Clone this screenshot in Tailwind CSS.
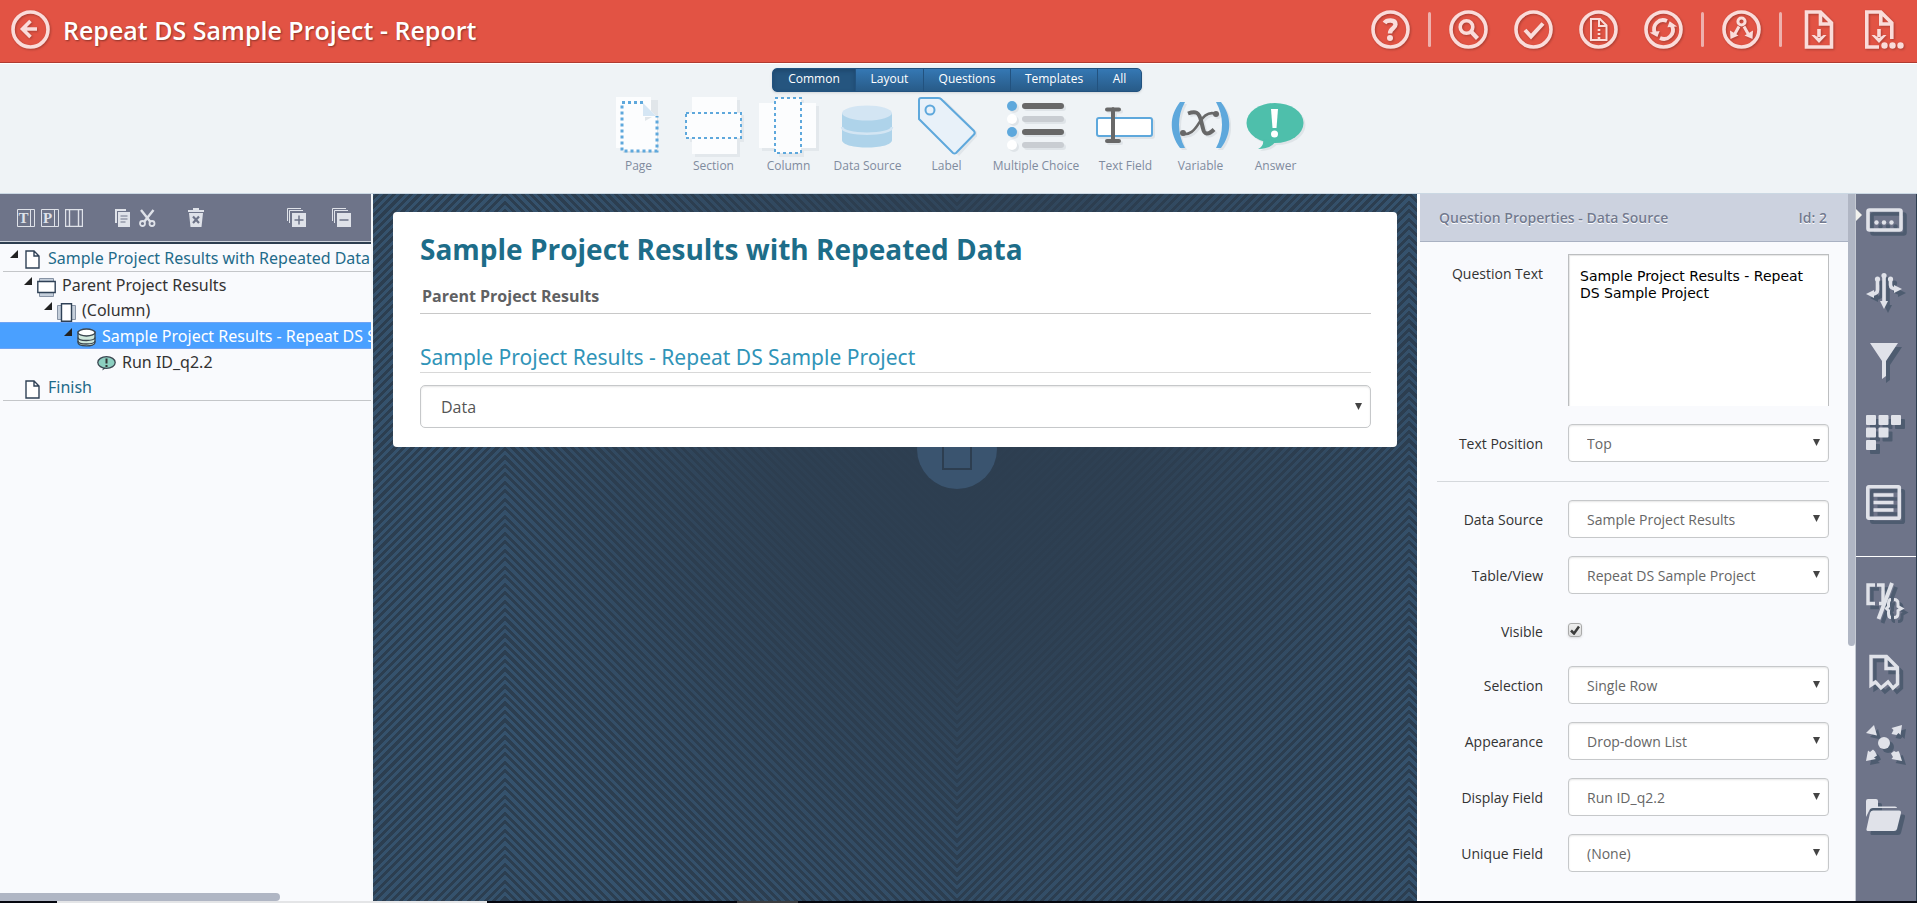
<!DOCTYPE html>
<html lang="en">
<head>
<meta charset="utf-8">
<title>Repeat DS Sample Project - Report</title>
<script src="https://cdn.jsdelivr.net/npm/@tailwindcss/browser@4"></script>
</head>
<body class="h-screen flex flex-col overflow-hidden bg-[#eff3f6] font-['Open_Sans','Noto_Sans',sans-serif] text-[#333]">

<header class="h-16 shrink-0 flex items-center bg-[#e25344] border-b border-white pl-[11px] pr-[13px] pb-1 shadow-[inset_0_-1px_0_#b03a30] text-[#fadcda]">
  <button aria-label="Back" class="shrink-0">
    <svg class="size-[39px] drop-shadow-[1px_1px_1px_rgba(0,0,0,0.25)]" viewBox="0 0 39 39" fill="none" stroke="currentColor"><circle cx="19.500" cy="19.500" r="17.500" stroke-width="3.600"/><path d="M26 19H12.500M19.500 11l-8 8 8 8" stroke-width="3.600"/></svg>
  </button>
  <h1 class="ml-[13px] flex-1 text-[25px] leading-8 font-semibold text-white [text-shadow:1px_1px_2px_rgba(0,0,0,0.4)]">Repeat DS Sample Project - Report</h1>
  <nav class="flex items-center gap-[18px]">
    <button aria-label="Help"><svg class="size-[39px] drop-shadow-[1px_1px_1px_rgba(0,0,0,0.25)]" viewBox="0 0 39 39" fill="none" stroke="currentColor"><circle cx="19.500" cy="19.500" r="17.500" stroke-width="3.600"/><path d="M13.500 13c2-3 11-4 11 1.500 0 4-5.500 3.500-5.500 9" stroke-width="4.400"/><circle cx="19" cy="28" r="3" fill="currentColor" stroke="none"/></svg></button>
    <span class="w-[3px] h-[35px] rounded bg-[#eeb0ac]"></span>
    <div class="flex gap-[26px]">
      <button aria-label="Preview"><svg class="size-[39px] drop-shadow-[1px_1px_1px_rgba(0,0,0,0.25)]" viewBox="0 0 39 39" fill="none" stroke="currentColor"><circle cx="19.500" cy="19.500" r="17.500" stroke-width="3.600"/><circle cx="17.500" cy="17" r="6.300" stroke-width="3.600"/><path d="M22 21.500l6.500 7" stroke-width="4.200"/></svg></button>
      <button aria-label="Validate"><svg class="size-[39px] drop-shadow-[1px_1px_1px_rgba(0,0,0,0.25)]" viewBox="0 0 39 39" fill="none" stroke="currentColor"><circle cx="19.500" cy="19.500" r="17.500" stroke-width="3.600"/><path d="M11 20l6 6.500L29 13.500" stroke-width="4"/></svg></button>
      <button aria-label="Document"><svg class="size-[39px] drop-shadow-[1px_1px_1px_rgba(0,0,0,0.25)]" viewBox="0 0 39 39" fill="none" stroke="currentColor"><circle cx="19.500" cy="19.500" r="17.500" stroke-width="3.600"/><path d="M12 9h9l6.500 6.500V30H12zM20 9v7h7.500" stroke-width="2"/><path d="M20 19v10" stroke-width="2.600" stroke-dasharray="2 2"/></svg></button>
      <button aria-label="Refresh"><svg class="size-[39px] drop-shadow-[1px_1px_1px_rgba(0,0,0,0.25)]" viewBox="0 0 39 39" fill="none" stroke="currentColor"><circle cx="19.500" cy="19.500" r="17.500" stroke-width="3.600"/><path d="M23 11a9 9 0 0 0-12 12M16 28a9 9 0 0 0 12-12" stroke-width="3.800"/><path d="M24.500 16.500l1.500-4 5 3.500zM8 23l5 3 1.500-4z" stroke-width="1.500" fill="currentColor"/></svg></button>
    </div>
    <span class="w-[3px] h-[35px] rounded bg-[#eeb0ac]"></span>
    <button aria-label="Share"><svg class="size-[39px] drop-shadow-[1px_1px_1px_rgba(0,0,0,0.25)]" viewBox="0 0 39 39" fill="none" stroke="currentColor"><circle cx="19.500" cy="19.500" r="17.500" stroke-width="3.600"/><circle cx="19.500" cy="11.500" r="3.600" stroke-width="3"/><path d="M17 16.500l-4.500 8M22 16.500l4.500 8" stroke-width="3"/><path d="M8 20.500l8.500 5-8 3.500zM31 20.500l-8.500 5 8 3.500z" fill="currentColor" stroke="none"/></svg></button>
    <span class="w-[3px] h-[35px] rounded bg-[#eeb0ac]"></span>
    <div class="flex gap-[26px]">
      <button aria-label="Save"><svg class="size-[39px] drop-shadow-[1px_1px_1px_rgba(0,0,0,0.25)]" viewBox="0 0 39 39" fill="none" stroke="currentColor"><path d="M6.500 2h14l11 11v24h-25zM20.500 2v12h11" stroke-width="3.600"/><path d="M19 19v8" stroke-width="3.600"/><path d="M11.500 25h3l4.500 3 4.500-3h3L19 33z" fill="currentColor" stroke="none"/></svg></button>
      <button aria-label="Save as"><svg class="size-[39px] drop-shadow-[1px_1px_1px_rgba(0,0,0,0.25)]" viewBox="0 0 39 39" fill="none" stroke="currentColor"><path d="M14 37H1.800V2h14l11 11v16M15.800 2v12h11" stroke-width="3.600"/><path d="M14 19v8" stroke-width="3.600"/><path d="M6.500 25h3l4.500 3 4.500-3h3L14 33z" fill="currentColor" stroke="none"/><g fill="currentColor" stroke="none"><circle cx="19.500" cy="35.500" r="3.200"/><circle cx="27.500" cy="35.500" r="3.200"/><circle cx="35.500" cy="35.500" r="3.200"/></g></svg></button>
    </div>
  </nav>
</header>

<section class="h-[130px] shrink-0 flex flex-col items-center pt-1 pr-[3px] border-b border-[#cbd8e3]">
  <div role="tablist" class="flex h-6 rounded-[5px] overflow-hidden border border-[#22527f] bg-linear-to-b from-[#3578b4] to-[#285b88] text-[12px] leading-5 text-white shadow-sm [text-shadow:0_1px_1px_rgba(0,0,0,0.4)]">
    <button role="tab" class="w-[82px] pb-[2px] bg-[#25557f] shadow-[inset_0_2px_4px_#1d466c]">Common</button>
    <button role="tab" class="w-[68px] pb-[2px] border-l border-[#22527f]">Layout</button>
    <button role="tab" class="w-[87px] pb-[2px] border-l border-[#22527f]">Questions</button>
    <button role="tab" class="w-[87px] pb-[2px] border-l border-[#22527f]">Templates</button>
    <button role="tab" class="w-[44px] pb-[2px] border-l border-[#22527f]">All</button>
  </div>
  <div class="flex gap-[15px] mt-1 text-[12px] leading-4 font-medium text-[#7f8b9e] [text-shadow:0_1px_0_#fff]">
    <button class="w-[60px] flex flex-col items-center">
      <svg class="w-[60px] h-[62px]" viewBox="0 0 60 62"><path d="M10 4h39v53H14z" fill="#e1e6ea"/><path d="M7 1h35v51H7z" fill="#fcfdfe"/><path d="M13 7h21l14 14v34H13z" fill="#fcfdfe"/><path d="M34 7v13h13z" fill="#d5e6f4"/><path d="M36 25l7-4h-7z" fill="#e1e6ea"/><path d="M34 6.500H13V55h35V20" fill="none" stroke="#5ea8dc" stroke-width="3" stroke-dasharray="3 3"/></svg>
      Page</button>
    <button class="w-[60px] flex flex-col items-center">
      <svg class="w-[60px] h-[62px]" viewBox="0 0 60 62"><path d="M6 19h54v27H6zM11 4h45v57H11z" fill="#e3e8ec"/><path d="M8 1h45v57H8z" fill="#fcfdfe"/><path d="M2 17h55v25H2z" fill="#fcfdfe" stroke="#5ea8dc" stroke-width="2" stroke-dasharray="3 3"/></svg>
      Section</button>
    <button class="w-[60px] flex flex-col items-center">
      <svg class="w-[60px] h-[62px]" viewBox="0 0 60 62"><path d="M3 10h57v45H3zM20 4h25v57H20z" fill="#e3e8ec"/><path d="M0 7h57v45H0z" fill="#fcfdfe"/><path d="M16 2h26v55H16z" fill="#fcfdfe" stroke="#5ea8dc" stroke-width="2" stroke-dasharray="3 3"/></svg>
      Column</button>
    <button class="w-[68px] flex flex-col items-center whitespace-nowrap">
      <svg class="w-[60px] h-[62px]" viewBox="0 0 60 62"><path d="M4 17v27c0 10 50 10 50 0V17z" fill="#aed3ea"/><ellipse cx="29" cy="17" rx="25" ry="7.500" fill="#d3e5f3"/><path d="M4 31c0 9 50 9 50 0" fill="none" stroke="#d3e5f3" stroke-width="2.500"/></svg>
      Data Source</button>
    <button class="w-[60px] flex flex-col items-center">
      <svg class="w-[60px] h-[62px]" viewBox="0 0 60 62"><path d="M4 4h24l34 34-20 22L5 26z" fill="#e1e6ea"/><path d="M4 2h17q2 0 3 1l33 32q1.500 2 0 3.500L39 57q-1.500 1-3 0L2 23V4q0-2 2-2z" fill="#e8f1f9" stroke="#5ea8dc" stroke-width="2"/><circle cx="13" cy="14" r="4.500" fill="none" stroke="#5ea8dc" stroke-width="2"/></svg>
      Label</button>
    <button class="w-[89px] flex flex-col items-center whitespace-nowrap">
      <svg class="w-[60px] h-[62px]" viewBox="0 0 60 62"><g class="drop-shadow-[2px_2px_0_#dfe4e8]"><circle cx="6" cy="10" r="5" fill="#5ea8dc"/><circle cx="6" cy="23" r="5" fill="#fff"/><circle cx="6" cy="36" r="5" fill="#5ea8dc"/><circle cx="6" cy="49" r="5" fill="#fff"/><g stroke-width="6" stroke-linecap="round"><path d="M19 10h36M19 36h36" stroke="#686868"/><path d="M19 23h36M19 49h36" stroke="#c9cdd2"/></g></g></svg>
      Multiple Choice</button>
    <button class="w-[60px] flex flex-col items-center whitespace-nowrap">
      <svg class="w-[60px] h-[62px]" viewBox="0 0 60 62"><g class="drop-shadow-[2px_2px_0_#dfe4e8]"><rect x="1" y="22" width="55" height="18" rx="2" fill="#fff" stroke="#5ea8dc" stroke-width="2"/><path d="M11 13.500h12M11 45h12M17 13v32" fill="none" stroke="#686868" stroke-width="4" stroke-linecap="round"/></g></svg>
      Text Field</button>
    <button class="w-[60px] flex flex-col items-center">
      <svg class="w-[60px] h-[62px]" viewBox="0 0 60 62"><g class="drop-shadow-[2px_2px_0_#dfe4e8]"><path d="M9 6h5C6 20 6 37 14 52h-5C-2 37-2 20 9 6zM45 6h5c11 14 11 31 0 46h-5c8-15 8-32 0-46z" fill="#5ea8dc"/><path d="M17 17.500c8-3 11-1 13 7l2 8c1 6 5 7 11 1" fill="none" stroke="#686868" stroke-width="4"/><path d="M45 18c-7-3-12 1-17 9s-9 12-17 11" fill="none" stroke="#686868" stroke-width="2.500"/><circle cx="45" cy="18" r="3" fill="#686868"/><circle cx="12" cy="37" r="3" fill="#686868"/></g></svg>
      Variable</button>
    <button class="w-[60px] flex flex-col items-center">
      <svg class="w-[60px] h-[62px]" viewBox="0 0 60 62"><g class="drop-shadow-[2px_2px_0_#dfe4e8]"><ellipse cx="29" cy="27" rx="28.500" ry="20" fill="#4ebfab"/><path d="M17 43c1 5-1 8-5 10 8 0 15-3 18-8z" fill="#4ebfab"/><path d="M25 13h7l-1.500 19h-4z" fill="#fff"/><circle cx="28.500" cy="38" r="3.500" fill="#fff"/></g></svg>
      Answer</button>
  </div>
</section>

<main class="relative flex-1 min-h-0 flex bg-[#2d3e50]">
  <!-- chevron backdrop: alternating mirrored stripes, darkened towards the middle -->
  <div aria-hidden="true" class="absolute inset-0 overflow-hidden flex justify-center pr-[3px]">
    <div class="w-[452px] shrink-0 bg-[repeating-linear-gradient(135deg,#2c3e50_0px,#2c3e50_3px,#35526d_3px,#35526d_6px)]"></div>
    <div class="w-[452px] shrink-0 -scale-x-100 bg-[repeating-linear-gradient(135deg,#2c3e50_0px,#2c3e50_3px,#35526d_3px,#35526d_6px)]"></div>
    <div class="w-[452px] shrink-0 bg-[repeating-linear-gradient(135deg,#2c3e50_0px,#2c3e50_3px,#35526d_3px,#35526d_6px)]"></div>
    <div class="w-[452px] shrink-0 -scale-x-100 bg-[repeating-linear-gradient(135deg,#2c3e50_0px,#2c3e50_3px,#35526d_3px,#35526d_6px)]"></div>
    <div class="absolute inset-0 bg-[radial-gradient(ellipse_500px_500px_at_50%_280px,#2d3e50_0%,#2d3e50dd_35%,transparent_100%)]"></div>
    <div class="absolute top-[215px] size-20 rounded-full bg-[#3a546f] flex justify-center items-center"><span class="w-[30px] h-[42px] border-2 border-[#2d3e50]"></span></div>
  </div>

  <aside class="relative w-[373px] shrink-0 flex flex-col border-r-2 border-[#f4f7f9] bg-[#f9fafd]">
    <div class="h-12 shrink-0 flex items-center pl-[17px] pr-5 bg-[#6e7489] border-b border-[#cfd4dc] text-[#dfe2e9]">
      <div class="flex gap-[6px]">
        <button aria-label="Title"><svg class="size-[18px]" viewBox="0 0 18 18" fill="none" stroke="currentColor"><path d="M.5.500h17v17H.500zM13.500.500v17" /><text x="1.500" y="14" font-family="Liberation Serif, serif" font-weight="bold" font-size="15" fill="currentColor" stroke="none">T</text></svg></button>
        <button aria-label="Page"><svg class="size-[18px]" viewBox="0 0 18 18" fill="none" stroke="currentColor"><path d="M.5.500h17v17H.500zM13.500.500v17"/><text x="2" y="14" font-family="Liberation Serif, serif" font-weight="bold" font-size="15" fill="currentColor" stroke="none">P</text></svg></button>
        <button aria-label="Columns"><svg class="size-[18px]" viewBox="0 0 18 18" fill="none" stroke="currentColor"><path d="M.5.500h17v17H.500zM4.500.500v17M13.500.500v17" stroke-width="1.400"/></svg></button>
      </div>
      <div class="flex gap-2 ml-[32px]">
        <button aria-label="Copy"><svg class="w-4 h-[18px]" viewBox="0 0 16 18"><path d="M0 0h11v2H2v12H0z" fill="currentColor"/><path d="M3 3h12v15H3z" fill="currentColor"/><path d="M5.500 7h7M5.500 10h7M5.500 13h5" stroke="#6e7489" fill="none"/></svg></button>
        <button aria-label="Cut"><svg class="w-[17px] h-[18px]" viewBox="0 0 17 18" fill="none" stroke="currentColor"><path d="M2 1l9.500 12M14.500 1L5 13" stroke-width="2.400"/><circle cx="3.500" cy="14.500" r="2.500" stroke-width="1.800"/><circle cx="13" cy="14.500" r="2.500" stroke-width="1.800"/></svg></button>
      </div>
      <button aria-label="Delete" class="ml-[32px]"><svg class="w-4 h-[19px]" viewBox="0 0 16 19"><path d="M0 2h5V0h6v2h5v2H0zM1 5h14l-1.500 14h-11z" fill="currentColor"/><path d="M5 8.500l6 6.500M11 8.500L5 15" stroke="#6e7489" stroke-width="2.200"/></svg></button>
      <div class="flex gap-[26px] ml-auto">
        <button aria-label="Expand all"><svg class="size-[19px]" viewBox="0 0 19 19"><path d="M.5 13V.500H14M2.500 15V2.500H16" fill="none" stroke="currentColor"/><path d="M5 5h14v14H5z" fill="currentColor"/><path d="M12 7.500v9M7.500 12h9" stroke="#6e7489" stroke-width="1.500"/></svg></button>
        <button aria-label="Collapse all"><svg class="size-[19px]" viewBox="0 0 19 19"><path d="M.5 13V.500H14M2.500 15V2.500H16" fill="none" stroke="currentColor"/><path d="M5 5h14v14H5z" fill="currentColor"/><path d="M7.500 12h9" stroke="#6e7489" stroke-width="1.500"/></svg></button>
      </div>
    </div>
    <ul class="flex-1 border-t-2 border-[#2d3e50] overflow-hidden font-['Noto_Sans',sans-serif] text-[16px] leading-6 whitespace-nowrap">
      <li class="ml-[3px] pl-[7px] h-7 flex items-center gap-[7px] border-b border-[#c4c6c9] text-[#1f6b8a]">
        <svg class="size-2 mb-2 shrink-0" viewBox="0 0 8 8"><path d="M8 0v8H0z" fill="#222"/></svg>
        <svg class="w-[15px] h-[19px] mt-1 shrink-0" viewBox="0 0 15 19" fill="#fff" stroke="#2f4156" stroke-width="1.400"><path d="M1 1h8l5 5v12H1zM9 1v5h5"/></svg>
        <span class="ml-[1px]">Sample Project Results with Repeated Data</span></li>
      <li class="pl-6 h-[26px] flex items-center gap-[5px]">
        <svg class="size-2 mb-2 shrink-0" viewBox="0 0 8 8"><path d="M8 0v8H0z" fill="#222"/></svg>
        <svg class="w-[19px] h-[19px] mt-1 shrink-0" viewBox="0 0 19 19" stroke="#8793a5"><path d="M2.500.500h14v4h-14zM2.500 14.500h14v4h-14z" fill="#c5cfdb"/><path d="M.8 3.500h17.400v11H.8z" fill="#fff" stroke="#2f4156" stroke-width="1.400"/></svg>
        <span class="ml-[1px]">Parent Project Results</span></li>
      <li class="pl-11 h-6 flex items-center gap-[5px]">
        <svg class="size-2 mb-2 shrink-0" viewBox="0 0 8 8"><path d="M8 0v8H0z" fill="#222"/></svg>
        <svg class="w-[19px] h-[19px] mt-1 shrink-0" viewBox="0 0 19 19" stroke="#8793a5"><path d="M.5 2.500h4v14h-4zM14.500 2.500h4v14h-4z" fill="#c5cfdb"/><path d="M4.500.800h10v17.400h-10z" fill="#fff" stroke="#2f4156" stroke-width="1.400"/></svg>
        <span class="ml-[1px]">(Column)</span></li>
      <li class="pl-16 h-[27px] flex items-center gap-[5px] bg-[#4aa0ff] border-y border-[#6fa4f4] text-white">
        <svg class="size-2 mb-2 shrink-0" viewBox="0 0 8 8"><path d="M8 0v8H0z" fill="#222"/></svg>
        <svg class="w-[19px] h-[19px] mt-1 shrink-0" viewBox="0 0 19 19" stroke="#3a4650" stroke-width="1.300"><path d="M1 4v10.500c0 4.500 17 4.500 17 0V4z" fill="#cfe8dc"/><path d="M1 9.500c0 4 17 4 17 0M1 13c0 4 17 4 17 0" fill="none"/><ellipse cx="9.500" cy="4.500" rx="8.500" ry="3.500" fill="#fff"/></svg>
        <span class="ml-[1px]">Sample Project Results - Repeat DS Sample Project</span></li>
      <li class="pl-[97px] h-[25px] flex items-center gap-[5px]">
        <svg class="w-[19px] h-[15px] mt-1 shrink-0" viewBox="0 0 19 15"><path d="M5 14.500l2-3.500h4z" fill="#3a4650"/><ellipse cx="9.500" cy="6.500" rx="8.700" ry="5.800" fill="#8ccfc0" stroke="#3a4650" stroke-width="1.300"/><path d="M9.500 2.500v5M9.500 9v2" stroke="#333" stroke-width="2"/></svg>
        <span class="ml-[1px]">Run ID_q2.2</span></li>
      <li class="ml-[3px] pl-[22px] h-[27px] flex items-center gap-[7px] border-b border-[#c4c6c9] text-[#1f6b8a]">
        <svg class="w-[15px] h-[19px] mt-1 shrink-0" viewBox="0 0 15 19" fill="#fff" stroke="#2f4156" stroke-width="1.400"><path d="M1 1h8l5 5v12H1zM9 1v5h5"/></svg>
        <span class="ml-[1px]">Finish</span></li>
    </ul>
    <div class="w-[280px] h-2 rounded-r bg-[#b0b6c4]"></div>
  </aside>

  <section class="relative flex-1 min-w-0 p-5 pt-[18px]">
    <div class="rounded bg-white pt-[17px] pl-[27px] pb-[19px] pr-[26px]">
      <h2 class="text-[28px] leading-10 font-bold text-[#1d6d89]">Sample Project Results with Repeated Data</h2>
      <h3 class="mt-[14px] pl-[2px] pb-1 text-[16px] leading-[26px] font-bold text-[#5f6163] border-b border-[#c8c8c8]">Parent Project Results</h3>
      <label for="data" class="block mt-[28px] font-['Noto_Sans',sans-serif] text-[21px] leading-[30px] text-[#3094b8] border-b border-[#d8d8d8]">Sample Project Results - Repeat DS Sample Project</label>
      <div class="relative mt-3">
        <select id="data" class="block w-full h-[43px] appearance-none rounded-[5px] border border-[#c6c8ca] bg-white pl-5 pr-8 text-[16px] text-[#555] shadow-[inset_0_1px_2px_rgba(0,0,0,0.1)]"><option>Data</option></select>
        <svg class="absolute right-[9px] top-[18px] w-[7px] h-[7px] pointer-events-none" viewBox="0 0 7 7"><path d="M0 0h7L3.500 7z" fill="#444"/></svg>
      </div>
    </div>
  </section>

  <aside class="relative w-[439px] shrink-0 flex bg-[#f9fafd] border-r border-[#c5cad3] border-l-[3px] border-l-white text-[14px]">
    <form class="flex-1 min-w-0">
      <div class="h-12 flex items-center justify-between pl-[19px] pr-[21px] bg-[#ccd2df] border-b border-[#a9b1c2] font-semibold text-[#727a8f] [text-shadow:0_1px_0_#fff]"><h2>Question Properties - Data Source</h2><span>Id: 2</span></div>
      <div class="ml-[17px] mr-[19px] pt-3 flex flex-col gap-[18px]">
        <div class="flex items-start gap-[25px]">
          <label for="qt" class="flex-1 pt-[10px] text-right leading-5 font-medium">Question Text</label>
          <textarea id="qt" class="w-[261px] h-[152px] resize-none border border-b-0 border-[#bcbec0] bg-white pl-[11px] pr-3 pt-[13px] font-['DejaVu_Sans',sans-serif] text-[14px] leading-[17px] text-black shadow-[inset_1px_1px_1px_rgba(0,0,0,0.1)]">Sample Project Results - Repeat DS Sample Project</textarea>
        </div>
        <div class="flex items-center gap-[25px]">
          <label for="tp" class="flex-1 text-right font-medium">Text Position</label>
          <div class="relative w-[261px]"><select id="tp" class="block w-full h-[38px] appearance-none rounded border border-[#c6c8ca] bg-white pl-[18px] text-[#666] shadow-[inset_0_1px_2px_rgba(0,0,0,0.1)]"><option>Top</option></select><svg class="absolute right-[9px] top-[15px] w-[7px] h-[7px] pointer-events-none" viewBox="0 0 7 7"><path d="M0 0h7L3.500 7z" fill="#444"/></svg></div>
        </div>
        <hr class="mt-[1px] border-[#d5d8dc]">
        <div class="flex items-center gap-[25px]">
          <label for="ds" class="flex-1 text-right font-medium">Data Source</label>
          <div class="relative w-[261px]"><select id="ds" class="block w-full h-[38px] appearance-none rounded border border-[#c6c8ca] bg-white pl-[18px] text-[#666] shadow-[inset_0_1px_2px_rgba(0,0,0,0.1)]"><option>Sample Project Results</option></select><svg class="absolute right-[9px] top-[15px] w-[7px] h-[7px] pointer-events-none" viewBox="0 0 7 7"><path d="M0 0h7L3.500 7z" fill="#444"/></svg></div>
        </div>
        <div class="flex items-center gap-[25px]">
          <label for="tv" class="flex-1 text-right font-medium">Table/View</label>
          <div class="relative w-[261px]"><select id="tv" class="block w-full h-[38px] appearance-none rounded border border-[#c6c8ca] bg-white pl-[18px] text-[#666] shadow-[inset_0_1px_2px_rgba(0,0,0,0.1)]"><option>Repeat DS Sample Project</option></select><svg class="absolute right-[9px] top-[15px] w-[7px] h-[7px] pointer-events-none" viewBox="0 0 7 7"><path d="M0 0h7L3.500 7z" fill="#444"/></svg></div>
        </div>
        <div class="flex items-center gap-[25px] h-9">
          <label for="vis" class="flex-1 pt-[2px] text-right font-medium">Visible</label>
          <div class="relative w-[261px]"><input id="vis" type="checkbox" checked class="block size-[14px] appearance-none rounded-[3px] border border-[#aaa] bg-linear-to-b from-[#eee] to-[#ddd] shadow-sm"><svg class="absolute left-[2px] top-[2px] size-[10px] pointer-events-none" viewBox="0 0 10 10"><path d="M1 5.500l3 3L9 1.500" fill="none" stroke="#3c3c3c" stroke-width="2.500"/></svg></div>
        </div>
        <div class="flex items-center gap-[25px]">
          <label for="sel" class="flex-1 text-right font-medium">Selection</label>
          <div class="relative w-[261px]"><select id="sel" class="block w-full h-[38px] appearance-none rounded border border-[#c6c8ca] bg-white pl-[18px] text-[#666] shadow-[inset_0_1px_2px_rgba(0,0,0,0.1)]"><option>Single Row</option></select><svg class="absolute right-[9px] top-[15px] w-[7px] h-[7px] pointer-events-none" viewBox="0 0 7 7"><path d="M0 0h7L3.500 7z" fill="#444"/></svg></div>
        </div>
        <div class="flex items-center gap-[25px]">
          <label for="app" class="flex-1 text-right font-medium">Appearance</label>
          <div class="relative w-[261px]"><select id="app" class="block w-full h-[38px] appearance-none rounded border border-[#c6c8ca] bg-white pl-[18px] text-[#666] shadow-[inset_0_1px_2px_rgba(0,0,0,0.1)]"><option>Drop-down List</option></select><svg class="absolute right-[9px] top-[15px] w-[7px] h-[7px] pointer-events-none" viewBox="0 0 7 7"><path d="M0 0h7L3.500 7z" fill="#444"/></svg></div>
        </div>
        <div class="flex items-center gap-[25px]">
          <label for="df" class="flex-1 text-right font-medium">Display Field</label>
          <div class="relative w-[261px]"><select id="df" class="block w-full h-[38px] appearance-none rounded border border-[#c6c8ca] bg-white pl-[18px] text-[#666] shadow-[inset_0_1px_2px_rgba(0,0,0,0.1)]"><option>Run ID_q2.2</option></select><svg class="absolute right-[9px] top-[15px] w-[7px] h-[7px] pointer-events-none" viewBox="0 0 7 7"><path d="M0 0h7L3.500 7z" fill="#444"/></svg></div>
        </div>
        <div class="flex items-center gap-[25px]">
          <label for="uf" class="flex-1 text-right font-medium">Unique Field</label>
          <div class="relative w-[261px]"><select id="uf" class="block w-full h-[38px] appearance-none rounded border border-[#c6c8ca] bg-white pl-[18px] text-[#666] shadow-[inset_0_1px_2px_rgba(0,0,0,0.1)]"><option>(None)</option></select><svg class="absolute right-[9px] top-[15px] w-[7px] h-[7px] pointer-events-none" viewBox="0 0 7 7"><path d="M0 0h7L3.500 7z" fill="#444"/></svg></div>
        </div>
      </div>
    </form>
    <div class="w-[7px] h-[452px] rounded-b bg-[#b0b6c4]"></div>
  </aside>

  <nav class="relative w-[61px] shrink-0 bg-[#6e7489] border-r border-[#2d3e50] text-[#e0e2e9]">
    <svg class="absolute left-0 top-[15px] w-[6px] h-3" viewBox="0 0 6 12"><path d="M0 0l6 6-6 6z" fill="#f2f2ee"/></svg>
    <div class="flex flex-col items-center gap-[31px] pt-[7px] pb-[31px] border-b border-white">
      <button aria-label="Properties"><svg class="block size-10 overflow-visible drop-shadow-[4px_4px_0_#4e5c70]" viewBox="0 0 40 40"><rect x="2" y="9" width="33" height="20" rx="1.500" fill="none" stroke="currentColor" stroke-width="3.600"/><g fill="currentColor"><circle cx="10.500" cy="21.500" r="2.200"/><circle cx="18" cy="21.500" r="2.200"/><circle cx="25.500" cy="21.500" r="2.200"/></g></svg></button>
      <button aria-label="Branching"><svg class="block size-10 overflow-visible drop-shadow-[4px_4px_0_#4e5c70]" viewBox="0 0 40 40" fill="none" stroke="currentColor" stroke-width="3.600"><path d="M18 3v27M11.500 7v11q0 4-6 4M24.500 7v6q0 4 7 4"/><g fill="currentColor" stroke="none"><circle cx="18" cy="3.500" r="2.600"/><circle cx="11.500" cy="7" r="2.600"/><circle cx="24.500" cy="7" r="2.600"/><path d="M14 29h8l-4 8zM8 18v8l-8-4zM28 13v8l8-4z"/></g></svg></button>
      <button aria-label="Filter"><svg class="block size-10 overflow-visible drop-shadow-[4px_4px_0_#4e5c70]" viewBox="0 0 40 40"><path d="M4 0h28L20 18v15l-4 3V18z" fill="currentColor"/></svg></button>
      <button aria-label="Grid"><svg class="block size-10 overflow-visible drop-shadow-[4px_4px_0_#4e5c70]" viewBox="0 0 40 40" fill="currentColor"><rect x="0" y="1" width="10" height="10" rx="1"/><rect x="12.500" y="1" width="10" height="10" rx="1"/><rect x="25" y="1" width="10" height="10" rx="1"/><rect x="0" y="13.500" width="10" height="10" rx="1"/><rect x="12.500" y="13.500" width="10" height="10" rx="1"/><rect x="0" y="26" width="10" height="10" rx="1"/></svg></button>
      <button aria-label="List"><svg class="block size-10 overflow-visible drop-shadow-[4px_4px_0_#4e5c70]" viewBox="0 0 40 40" fill="none" stroke="currentColor" stroke-width="3.600"><rect x="1.800" y="1.800" width="31.500" height="31.500" rx="1"/><path d="M7.500 10h20M7.500 17.500h20M7.500 25h20"/></svg></button>
    </div>
    <div class="flex flex-col items-center gap-[31px] pt-[25px]">
      <button aria-label="Expressions"><svg class="block size-10 overflow-visible drop-shadow-[4px_4px_0_#4e5c70]" viewBox="0 0 40 40" fill="none" stroke="currentColor" stroke-width="3.400"><path d="M9 3H2v18.500h7M11 3h6v18.500h-4"/><path d="M26 1L12.500 37" stroke-width="4"/><path d="M25 17.500q-2.500 0-2.500 4v3l-2 2 2 2v3q0 4 2.500 4M28 17.500q4 0 4 4v3l3.500 2-3.500 2v3q0 4-4 4" stroke-width="3"/></svg></button>
      <button aria-label="Page breaks"><svg class="block size-10 overflow-visible drop-shadow-[4px_4px_0_#4e5c70]" viewBox="0 0 40 40" fill="none" stroke="currentColor" stroke-width="3.400"><path d="M5 32V3.500h15.500l11 11V31l-4.500 4-5-6-7 6-5.500-6zM20 3.500v12h11.500" /></svg></button>
      <button aria-label="Distribute"><svg class="block size-10 overflow-visible drop-shadow-[4px_4px_0_#4e5c70]" viewBox="0 0 40 40" fill="currentColor"><circle cx="18" cy="19" r="6"/><path d="M0 9L8 1l3 10.500zM36 1L25.500 4l2 2-2 4 5 1 2-2 2 2zM0 37l2-10.500 2 1.500 3-2.500 2 2 2 4-3 2 2 1.500zM36 37l-10.500-2 1.500-2-2-3.500 3-2.500 2 1 2.500-1 1 2z"/></svg></button>
      <button aria-label="Files"><svg class="block size-10 overflow-visible drop-shadow-[4px_4px_0_#4e5c70]" viewBox="0 0 40 40" fill="currentColor"><path d="M0 22V6q0-2 2-2h8q2 0 2 2v5.500h17q2 0 2 1.500H7q-3 0-4 3z"/><path d="M7 15.500h26q2.500 0 2 2.500l-4 16q-.5 2-3 2H2.500Q0 36 .5 34L4 18q.5-2.500 3-2.500z"/></svg></button>
    </div>
  </nav>
</main>
<footer class="h-[2px] shrink-0 flex bg-[#05070f]"><span class="ml-[57px] w-[430px] bg-[#e4e5e7]"></span><span class="ml-[250px] w-[61px] bg-[#3c3d40]"></span></footer>
</body>
</html>
